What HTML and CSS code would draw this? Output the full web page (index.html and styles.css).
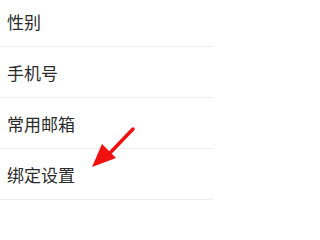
FILE: index.html
```html
<!DOCTYPE html>
<html lang="zh">
<head>
<meta charset="utf-8">
<link rel="stylesheet" href="styles.css">
</head>
<body>
<div class="list">
  <div class="row">性别</div>
  <div class="row">手机号</div>
  <div class="row">常用邮箱</div>
  <div class="row">绑定设置</div>
</div>
<svg class="arrow" width="214" height="207" viewBox="0 0 214 207">
  <line x1="133" y1="129" x2="108" y2="155" stroke="#f01010" stroke-width="3.5" stroke-linecap="round"/>
  <polygon points="92,167 102,144 116,158" fill="#f01010"/>
</svg>
</body>
</html>
```

FILE: styles.css
```css
html, body {
  margin: 0;
  padding: 0;
  background: #ffffff;
  overflow: hidden;
}
body {
  width: 214px;
  height: 207px;
  position: relative;
  font-family: "Noto Sans CJK SC", "Noto Sans", sans-serif;
}
.list {
  margin-top: -4px;
}
.row {
  height: 50px;
  border-bottom: 1px solid #efefef;
  display: flex;
  align-items: center;
  padding-left: 7px;
  font-size: 17px;
  color: #2b2b2b;
}
.arrow {
  position: absolute;
  left: 0;
  top: 0;
}
```
